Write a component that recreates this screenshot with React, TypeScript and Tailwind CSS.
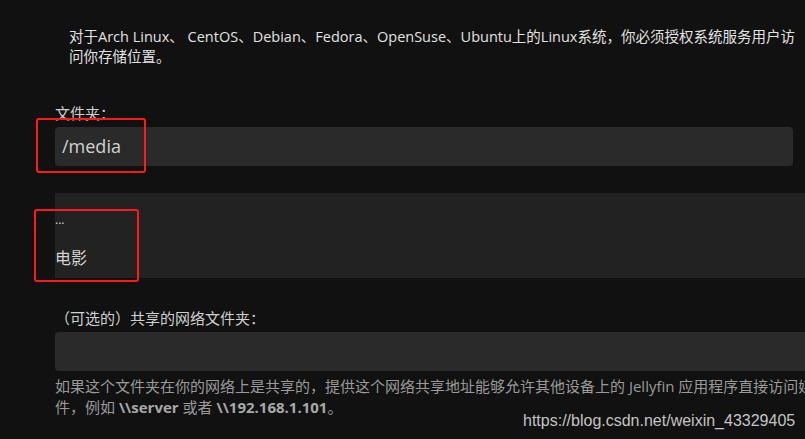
import React from "react";

const font = {
  fontFamily: '"Open Sans", "Noto Sans CJK SC", sans-serif',
};

export default function App() {
  return (
    <div
      className="relative h-[439px] w-[805px] overflow-hidden bg-[#111111] text-[#dddddd]"
      style={font}
    >
      <div className="w-[1000px] pl-[55px] pt-[27px]">
        <p className="whitespace-nowrap pl-[14px] text-[14.5px] leading-[20px] text-[#e2e2e2]">
          对于Arch Linux、 CentOS、Debian、Fedora、OpenSuse、Ubuntu上的Linux系统，你必须授权系统服务用户访
          <br />
          问你存储位置。
        </p>

        <div className="mt-[37px] flex flex-col">
          <label className="text-[15px] leading-[18px] text-[#cfcfcf]">文件夹：</label>
          <div className="mt-[5px] flex h-[39px] w-[738px] items-center rounded-[4px] bg-[#2a2a2a] px-[7px] text-[18px] text-[#d2d2d2]">
            /media
          </div>
        </div>

        <div className="mt-[27px] flex h-[85px] flex-col bg-[#222222] pt-[21px] text-[#d4d4d4]">
          <span className="text-[12px] leading-[12px]">...</span>
          <span className="mt-[22px] text-[16px] leading-[20px]">电影</span>
        </div>

        <div className="mt-[31px] flex flex-col">
          <label className="text-[15px] leading-[18px] text-[#d0d0d0]">
            （可选的）共享的网络文件夹：
          </label>
          <div className="mt-[5px] h-[39px] rounded-[4px] bg-[#2a2a2a]" />
          <p className="mt-[5px] whitespace-nowrap text-[15px] leading-[21px] text-[#9a9a9a]">
            如果这个文件夹在你的网络上是共享的，提供这个网络共享地址能够允许其他设备上的 Jellyfin 应用程序直接访问媒体文
            <br />
            件，例如 <b className="font-bold text-[#a8a8a8]">\\server</b> 或者{" "}
            <b className="font-bold text-[#a8a8a8]">\\192.168.1.101</b>。
          </p>
        </div>
      </div>

      <div className="pointer-events-none absolute left-[36px] top-[118px] h-[55px] w-[110px] rounded-[3px] border-[2px] border-[#ff1a1a]" />
      <div className="pointer-events-none absolute left-[34px] top-[209px] h-[73px] w-[105px] rounded-[3px] border-[2px] border-[#ff1a1a]" />

      <span
        className="absolute left-[523px] top-[409px] text-[16px] text-[#c4c4c4]"
        style={{ fontFamily: '"Liberation Sans", Arial, sans-serif' }}
      >
        https://blog.csdn.net/weixin_43329405
      </span>
    </div>
  );
}
